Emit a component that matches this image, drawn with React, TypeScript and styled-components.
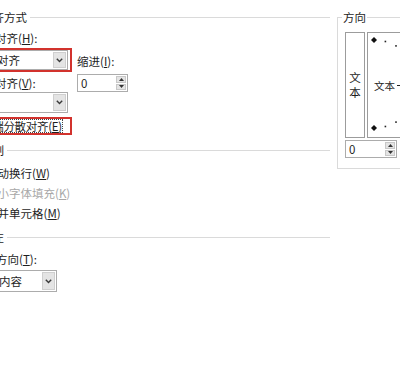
import * as React from 'react';
import styled, { createGlobalStyle } from 'styled-components';

const GlobalStyle = createGlobalStyle`
  html, body {
    margin: 0;
    padding: 0;
    background: #ffffff;
  }
  body {
    width: 400px;
    height: 384px;
    overflow: hidden;
    font-family: "Noto Sans CJK SC", "Liberation Sans", sans-serif;
    font-size: 11.5px;
    color: #1e1e1e;
  }
`;

const Page = styled.div`
  display: flex;
  align-items: flex-start;
  gap: 7px;
  width: 520px;
  margin-left: -42px;
  padding-top: 9px;
`;

const LeftPane = styled.div`
  width: 372px;
  display: flex;
  flex-direction: column;
`;

const GroupHeader = styled.div<{ top?: number }>`
  display: flex;
  align-items: center;
  gap: 3px;
  height: 16px;
  line-height: 16px;
  margin-top: ${(p) => p.top ?? 0}px;

  &::after {
    content: '';
    flex: 1;
    border-top: 1px solid #dadada;
  }
`;

const AlignBody = styled.div`
  display: flex;
  gap: 5px;
  padding-left: 8px;
`;

const Stack = styled.div<{ top?: number }>`
  display: flex;
  flex-direction: column;
  align-items: flex-start;
  margin-top: ${(p) => p.top ?? 0}px;
`;

const Label = styled.div<{ top?: number; left?: number }>`
  line-height: 16px;
  height: 16px;
  white-space: nowrap;
  margin-top: ${(p) => p.top ?? 0}px;
  margin-left: ${(p) => p.left ?? 0}px;
`;

const RedBox = styled.div<{ top?: number }>`
  display: flex;
  align-items: center;
  width: 106px;
  box-sizing: border-box;
  border: 2px solid #d2322d;
  padding: 0 1px 0 2px;
  margin-top: ${(p) => p.top ?? 0}px;
  overflow: hidden;
`;

const Select = styled.div<{ width: number; height: number; top?: number; left?: number }>`
  display: flex;
  align-items: stretch;
  box-sizing: border-box;
  width: ${(p) => p.width}px;
  height: ${(p) => p.height}px;
  border: 1px solid #acacac;
  background: #fff;
  margin-top: ${(p) => p.top ?? 0}px;
  margin-left: ${(p) => p.left ?? 0}px;
  flex: none;
`;

const SelectText = styled.div`
  flex: 1;
  padding-left: 3px;
  display: flex;
  align-items: center;
  white-space: nowrap;
  overflow: hidden;
`;

const SelectArrow = styled.div`
  width: 13px;
  margin: 1px;
  background: #e4e4e4;
  border: 1px solid #cfcfcf;
  box-sizing: border-box;
  display: flex;
  align-items: center;
  justify-content: center;
`;

const Spin = styled.div<{ width: number; top?: number }>`
  display: flex;
  box-sizing: border-box;
  width: ${(p) => p.width}px;
  height: 18px;
  border: 1px solid #acacac;
  margin-top: ${(p) => p.top ?? 0}px;
`;

const SpinText = styled.div`
  flex: 1;
  padding-left: 3px;
  display: flex;
  align-items: center;
`;

const SpinButtons = styled.div`
  width: 10px;
  margin: 1px;
  display: flex;
  flex-direction: column;
  gap: 1px;
`;

const SpinButton = styled.div`
  flex: 1;
  background: #e4e4e4;
  border: 1px solid #c8c8c8;
  box-sizing: border-box;
  display: flex;
  align-items: center;
  justify-content: center;
`;

const CheckRow = styled.div<{ disabled?: boolean }>`
  display: flex;
  align-items: center;
  gap: 3px;
  height: 20px;
  white-space: nowrap;
  color: ${(p) => (p.disabled ? '#a8a8a8' : '#1e1e1e')};
`;

const Checkbox = styled.span<{ disabled?: boolean }>`
  width: 13px;
  height: 13px;
  box-sizing: border-box;
  border: 1px solid ${(p) => (p.disabled ? '#c6c6c6' : '#8a8a8a')};
  background: #fff;
  flex: none;
`;

const RedCheck = styled.div`
  display: flex;
  align-items: center;
  gap: 2px;
  height: 14px;
  margin-left: -5px;
  white-space: nowrap;
`;

const Focus = styled.span`
  border: 1px dotted #444;
  line-height: 12px;
  letter-spacing: -0.3px;
`;

const CheckList = styled.div`
  display: flex;
  flex-direction: column;
  margin-top: 5px;
  padding-left: 12px;
`;

const DirBody = styled.div`
  display: flex;
  flex-direction: column;
  padding-left: 14px;
`;

const OrientGroup = styled.fieldset`
  width: 120px;
  margin: 0;
  padding: 0 0 10px 7px;
  border: 1px solid #dadada;
  display: flex;
  flex-direction: column;
`;

const Legend = styled.legend`
  padding: 0 1px;
  margin-left: -3px;
  line-height: 16px;
  font-size: 11.5px;
`;

const OrientRow = styled.div`
  display: flex;
  gap: 2px;
  margin-top: 7px;
`;

const VertBox = styled.div`
  width: 20px;
  height: 106px;
  box-sizing: border-box;
  border: 1px solid #9c9c9c;
  display: flex;
  flex-direction: column;
  align-items: center;
  justify-content: center;
  line-height: 15px;
`;

const DialBox = styled.div`
  width: 72px;
  height: 106px;
  box-sizing: border-box;
  border: 1px solid #9c9c9c;
`;

const Arrow = ({ up }: { up?: boolean }) => (
  <svg width="5" height="3" viewBox="0 0 5 3">
    <path d={up ? 'M0 3 L2.5 0 L5 3 Z' : 'M0 0 L2.5 3 L5 0 Z'} fill="#333" />
  </svg>
);

const Chevron = () => (
  <svg width="7" height="5" viewBox="0 0 7 5">
    <path d="M0.8 0.8 L3.5 3.6 L6.2 0.8" fill="none" stroke="#3a3a3a" strokeWidth="1.4" />
  </svg>
);

function Dropdown({
  value,
  width,
  height = 20,
  top,
  left,
}: {
  value: string;
  width: number;
  height?: number;
  top?: number;
  left?: number;
}) {
  return (
    <Select width={width} height={height} top={top} left={left}>
      <SelectText>{value}</SelectText>
      <SelectArrow>
        <Chevron />
      </SelectArrow>
    </Select>
  );
}

function Spinner({ width, top }: { width: number; top?: number }) {
  return (
    <Spin width={width} top={top}>
      <SpinText>0</SpinText>
      <SpinButtons>
        <SpinButton>
          <Arrow up />
        </SpinButton>
        <SpinButton>
          <Arrow />
        </SpinButton>
      </SpinButtons>
    </Spin>
  );
}

function Dial() {
  const cx = 6;
  const cy = 51;
  const r = 44;
  const dots = [15, 30, 45, 60, 75, 105, 120, 135, 150, 165].map((deg) => {
    const t = (deg * Math.PI) / 180;
    return { x: cx + r * Math.sin(t), y: cy - r * Math.cos(t) };
  });
  return (
    <svg width="70" height="104" viewBox="0 0 70 104">
      {dots.map((d, i) => (
        <rect key={i} x={d.x - 0.8} y={d.y - 0.8} width="1.6" height="1.6" fill="#222" />
      ))}
      <path d={`M${cx} ${cy - r - 3} l3 3 l-3 3 l-3 -3 Z`} fill="#111" />
      <path d={`M${cx} ${cy + r - 3} l3 3 l-3 3 l-3 -3 Z`} fill="#111" />
      <text x="6" y="57" fontSize="10.5" fill="#1e1e1e" fontFamily="Noto Sans CJK SC, sans-serif">
        文本
      </text>
      <line x1="29" y1="52.5" x2="70" y2="52.5" stroke="#222" strokeWidth="1" />
    </svg>
  );
}

export default function App() {
  return (
    <>
      <GlobalStyle />
      <Page>
        <LeftPane>
          <GroupHeader>文本对齐方式</GroupHeader>
          <AlignBody>
            <Stack>
              <Label top={5} left={6}>
                水平对齐(<u>H</u>):
              </Label>
              <RedBox top={2}>
                <Dropdown value="两端对齐" width={98} />
              </RedBox>
              <Label top={3} left={6}>
                垂直对齐(<u>V</u>):
              </Label>
              <Dropdown value="居中" width={98} height={21} top={1} left={4} />
              <RedBox top={4}>
                <RedCheck>
                  <Checkbox />
                  <Focus>
                    两端分散对齐(<u>E</u>)
                  </Focus>
                </RedCheck>
              </RedBox>
            </Stack>
            <Stack top={28}>
              <Label>
                缩进(<u>I</u>):
              </Label>
              <Spinner width={51} top={5} />
            </Stack>
          </AlignBody>

          <GroupHeader top={7}>文本控制</GroupHeader>
          <CheckList>
            <CheckRow>
              <Checkbox />
              <span>
                自动换行(<u>W</u>)
              </span>
            </CheckRow>
            <CheckRow disabled>
              <Checkbox disabled />
              <span>
                缩小字体填充(<u>K</u>)
              </span>
            </CheckRow>
            <CheckRow>
              <Checkbox />
              <span>
                合并单元格(<u>M</u>)
              </span>
            </CheckRow>
          </CheckList>

          <GroupHeader top={6}>从右到左</GroupHeader>
          <DirBody>
            <Label top={6} left={1}>
              文字方向(<u>T</u>):
            </Label>
            <Dropdown value="根据内容" width={85} height={22} top={3} />
          </DirBody>
        </LeftPane>

        <OrientGroup>
          <Legend>方向</Legend>
          <OrientRow>
            <VertBox>
              <span>文</span>
              <span>本</span>
            </VertBox>
            <DialBox>
              <Dial />
            </DialBox>
          </OrientRow>
          <Spinner width={52} top={2} />
        </OrientGroup>
      </Page>
    </>
  );
}
